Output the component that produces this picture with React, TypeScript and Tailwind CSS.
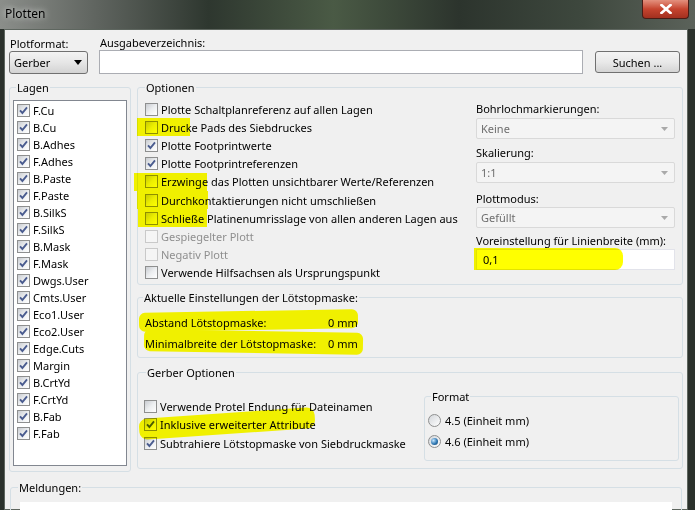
import React from "react";

const layers = [
  "F.Cu", "B.Cu", "B.Adhes", "F.Adhes", "B.Paste", "F.Paste", "B.SilkS", "F.SilkS", "B.Mask", "F.Mask",
  "Dwgs.User", "Cmts.User", "Eco1.User", "Eco2.User", "Edge.Cuts", "Margin", "B.CrtYd", "F.CrtYd", "B.Fab", "F.Fab",
];

type Opt = { label: string; checked?: boolean; disabled?: boolean; hl?: string };

const options: Opt[] = [
  { label: "Plotte Schaltplanreferenz auf allen Lagen" },
  { label: "Drucke Pads des Siebdruckes", hl: "left-[-8px] w-[53px]" },
  { label: "Plotte Footprintwerte", checked: true },
  { label: "Plotte Footprintreferenzen", checked: true },
  { label: "Erzwinge das Plotten unsichtbarer Werte/Referenzen", hl: "left-[-11px] w-[73px]" },
  { label: "Durchkontaktierungen nicht umschließen", hl: "left-[-8px] w-[71px]" },
  { label: "Schließe Platinenumrisslage von allen anderen Lagen aus", hl: "left-[-7px] w-[69px]" },
  { label: "Gespiegelter Plott", disabled: true },
  { label: "Negativ Plott", disabled: true },
  { label: "Verwende Hilfsachsen als Ursprungspunkt" },
];

function Check({ checked, disabled }: { checked?: boolean; disabled?: boolean }) {
  return (
    <span
      className={`flex h-[13px] w-[13px] shrink-0 items-center justify-center border ${
        disabled
          ? "border-[#c9c9c9] bg-[#f5f5f5]"
          : "border-[#8e8f8f] bg-linear-to-br from-[#c9ccd1] via-[#eceef0] to-[#ffffff]"
      }`}
    >
      {checked && (
        <svg width="9" height="9" viewBox="0 0 9 9">
          <path d="M1 4.4 3.4 7 8 1.4" fill="none" stroke="#4a5c8f" strokeWidth="1.9" />
        </svg>
      )}
    </span>
  );
}

function Radio({ on }: { on?: boolean }) {
  return (
    <span className="flex h-[13px] w-[13px] shrink-0 items-center justify-center rounded-full border border-[#8e8f8f] bg-linear-to-br from-[#d3d6da] to-[#ffffff]">
      {on && (
        <span className="h-[7px] w-[7px] rounded-full bg-[radial-gradient(circle_at_35%_35%,#c6e6ff,#2f78b3_55%,#123f6a)]" />
      )}
    </span>
  );
}

function Combo({ value }: { value: string }) {
  return (
    <div className="flex h-[21px] items-center justify-between rounded-[2px] border border-[#d9d9d9] bg-[#f4f4f4] pl-[4px] pr-[6px] text-[#6d6d6d]">
      <span>{value}</span>
      <svg width="7" height="4" viewBox="0 0 7 4">
        <path d="M0 0h7L3.5 4z" fill="#a9a9a9" />
      </svg>
    </div>
  );
}

export default function App() {
  return (
    <div className="relative h-[510px] w-[695px] overflow-hidden whitespace-nowrap bg-[#2b312c] font-['Noto_Sans',sans-serif] text-[11px] leading-[15px] text-black">
      {/* Titelleiste */}
      <div className="flex h-[29px] items-start bg-[linear-gradient(90deg,#8b8e8a_0%,#5f645f_14%,#2e372f_30%,#4a5a45_48%,#2c342d_66%,#3e483e_84%,#5b625a_100%)]">
        <span className="pl-[5px] pt-[6px] text-[12px] [text-shadow:0_0_6px_#ffffff]">Plotten</span>
        <div className="ml-auto mr-[6px] flex h-[19px] w-[47px] items-center justify-center rounded-b-[4px] border border-t-0 border-[#4a1c15] bg-linear-to-b from-[#e3907e] via-[#c6442f] to-[#a3301f]">
          <svg width="12" height="10" viewBox="0 0 12 10">
            <path d="M1.5 1 10.5 9M10.5 1 1.5 9" stroke="#ffffff" strokeWidth="2.6" strokeLinecap="square" />
          </svg>
        </div>
      </div>

      {/* Clientbereich */}
      <div className="ml-[4px] mr-[7px] h-[481px] border border-[#5e665f] bg-[#f0f0f0] px-[4px] pt-[5px]">
        {/* Zeile 1 */}
        <div className="flex items-end">
          <div className="w-[79px] shrink-0">
            <div className="pl-[1px]">Plotformat:</div>
            <div className="flex h-[23px] items-center justify-between rounded-[3px] border border-[#707070] bg-linear-to-b from-[#f3f3f3] via-[#e6e6e6] to-[#d3d3d3] pl-[4px] pr-[5px]">
              <span>Gerber</span>
              <svg width="8" height="5" viewBox="0 0 8 5">
                <path d="M0 0h8L4 5z" fill="#000000" />
              </svg>
            </div>
          </div>
          <div className="ml-[11px] w-[484px] shrink-0">
            <div className="pl-[1px]">Ausgabeverzeichnis:</div>
            <div className="h-[24px] border border-[#abadb3] bg-white" />
          </div>
          <div className="mb-[1px] ml-[12px] flex h-[22px] w-[85px] shrink-0 items-center justify-center rounded-[3px] border border-[#707070] bg-linear-to-b from-[#f4f4f4] via-[#e9e9e9] to-[#d4d4d4]">
            Suchen ...
          </div>
        </div>

        {/* Zeile 2 */}
        <div className="mt-[6px] flex items-start gap-[6px]">
          <fieldset className="h-[392px] w-[122px] shrink-0 rounded-[3px] border border-[#d5dfe5]">
            <legend className="ml-[6px] px-[1px]">Lagen</legend>
            <div className="mx-[3px] mt-[5px] h-[366px] border border-[#828790] bg-white pt-[1px]">
              {layers.map((l) => (
                <div key={l} className="flex h-[17px] items-center gap-[3px] pl-[3px]">
                  <Check checked />
                  <span>{l}</span>
                </div>
              ))}
            </div>
          </fieldset>

          <div className="flex w-[546px] shrink-0 flex-col">
            <fieldset className="h-[205px] rounded-[3px] border border-[#d5dfe5]">
              <legend className="ml-[7px] px-[1px]">Optionen</legend>
              <div className="flex">
                <div className="w-[338px] pl-[7px] pt-[5px]">
                  {options.map((o) => (
                    <div key={o.label} className="relative flex h-[18.2px] items-center gap-[3px]">
                      {o.hl && (
                        <span className={`absolute top-0 z-10 h-full bg-[#ffff00] mix-blend-multiply ${o.hl}`} />
                      )}
                      <Check checked={o.checked} disabled={o.disabled} />
                      <span className={o.disabled ? "text-[#8f8f8f]" : ""}>{o.label}</span>
                    </div>
                  ))}
                </div>
                <div className="w-[199px] pt-[6px]">
                  <div>Bohrlochmarkierungen:</div>
                  <div className="mt-[2px]">
                    <Combo value="Keine" />
                  </div>
                  <div className="mt-[6px]">Skalierung:</div>
                  <div className="mt-[2px]">
                    <Combo value="1:1" />
                  </div>
                  <div className="mt-[8px]">Plottmodus:</div>
                  <div className="mt-[1px]">
                    <Combo value="Gefüllt" />
                  </div>
                  <div className="mt-[5px]">Voreinstellung für Linienbreite (mm):</div>
                  <div className="relative mt-[1px] flex h-[21px] items-center border border-[#e2e3ea] bg-white pl-[6px]">
                    <span className="absolute left-[-3px] top-[-2px] z-10 h-[22px] w-[149px] rounded-r-[8px] bg-[#ffff00] mix-blend-multiply" />
                    0,1
                  </div>
                </div>
              </div>
            </fieldset>

            <fieldset className="mt-[5px] h-[68px] rounded-[3px] border border-[#d5dfe5]">
              <legend className="ml-[5px] px-[1px]">Aktuelle Einstellungen der Lötstopmaske:</legend>
              <div className="relative pl-[7px] pt-[7px]">
                <span className="absolute left-[1px] top-[6px] z-10 h-[19px] w-[219px] -rotate-[1deg] rounded-[6px] bg-[#ffff00] mix-blend-multiply" />
                <span className="absolute left-[6px] top-[26px] z-10 h-[22px] w-[219px] rotate-[1deg] rounded-[6px] bg-[#ffff00] mix-blend-multiply" />
                <div className="flex h-[21px] items-center">
                  <span className="w-[183px]">Abstand Lötstopmaske:</span>
                  <span>0 mm</span>
                </div>
                <div className="flex h-[21px] items-center">
                  <span className="w-[183px]">Minimalbreite der Lötstopmaske:</span>
                  <span>0 mm</span>
                </div>
              </div>
            </fieldset>

            <fieldset className="mt-[7px] h-[104px] rounded-[3px] border border-[#d5dfe5]">
              <legend className="ml-[8px] px-[1px]">Gerber Optionen</legend>
              <div className="flex">
                <div className="relative w-[286px] pl-[6px] pt-[17px]">
                  <span className="absolute left-[1px] top-[33px] z-10 h-[21px] w-[176px] -rotate-[4deg] rounded-[8px] bg-[#ffff00] mix-blend-multiply" />
                  <div className="flex h-[18.5px] items-center gap-[3px]">
                    <Check />
                    <span>Verwende Protel Endung für Dateinamen</span>
                  </div>
                  <div className="flex h-[18.5px] items-center gap-[3px]">
                    <Check checked />
                    <span>Inklusive erweiterter Attribute</span>
                  </div>
                  <div className="flex h-[18.5px] items-center gap-[3px]">
                    <Check checked />
                    <span>Subtrahiere Lötstopmaske von Siebdruckmaske</span>
                  </div>
                </div>
                <fieldset className="ml-auto mr-[3px] mt-[9px] h-[72px] w-[255px] rounded-[3px] border border-[#d5dfe5]">
                  <legend className="ml-[6px] px-[1px]">Format</legend>
                  <div className="pl-[3px] pt-[6px]">
                    <div className="flex h-[21px] items-center gap-[4px]">
                      <Radio />
                      <span>4.5 (Einheit mm)</span>
                    </div>
                    <div className="flex h-[21px] items-center gap-[4px]">
                      <Radio on />
                      <span>4.6 (Einheit mm)</span>
                    </div>
                  </div>
                </fieldset>
              </div>
            </fieldset>
          </div>
        </div>

        {/* Meldungen */}
        <fieldset className="ml-[1px] mr-[1px] mt-[8px] h-[60px] rounded-[3px] border border-[#d5dfe5]">
          <legend className="ml-[7px] px-[1px]">Meldungen:</legend>
          <div className="mx-[9px] mt-[7px] h-[40px] bg-white" />
        </fieldset>
      </div>
    </div>
  );
}
